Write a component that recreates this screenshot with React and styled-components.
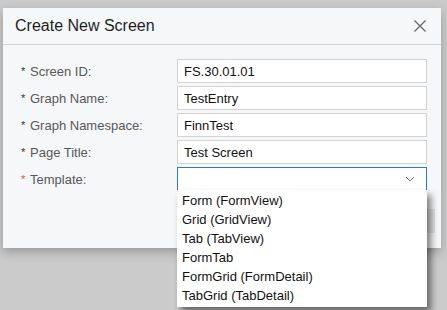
import { Fragment } from "react";
import styled, { createGlobalStyle } from "styled-components";

const GlobalStyle = createGlobalStyle`
  html, body {
    margin: 0;
    padding: 0;
    background: #cbcbcb;
    font-family: "Liberation Sans", Arial, sans-serif;
  }
  #root {
    height: 310px;
    overflow: hidden;
  }
`;

const fields = [
  { label: "Screen ID:", value: "FS.30.01.01" },
  { label: "Graph Name:", value: "TestEntry" },
  { label: "Graph Namespace:", value: "FinnTest" },
  { label: "Page Title:", value: "Test Screen" },
];

const options = [
  "Form (FormView)",
  "Grid (GridView)",
  "Tab (TabView)",
  "FormTab",
  "FormGrid (FormDetail)",
  "TabGrid (TabDetail)",
];

const Dialog = styled.div`
  margin: 8px 0 0 3px;
  width: 438px;
  background: #f5f7f9;
  box-shadow: 0 4px 10px rgba(0, 0, 0, 0.25);
  box-sizing: border-box;
`;

const Header = styled.header`
  height: 36px;
  display: flex;
  align-items: center;
  justify-content: space-between;
  padding: 0 14px 0 12px;
  border-bottom: 1px solid #d4d7da;
`;

const Title = styled.h2`
  margin: 0;
  font-size: 16px;
  font-weight: normal;
  color: #1f1f1f;
`;

const CloseButton = styled.button`
  border: 0;
  background: transparent;
  padding: 0;
  width: 14px;
  height: 14px;
  display: flex;
  color: #6b6b6b;
`;

const Body = styled.div`
  padding: 14px 14px 0 15px;
  display: grid;
  grid-template-columns: 159px 250px;
  row-gap: 3px;
`;

const Label = styled.label`
  display: flex;
  align-items: center;
  height: 24px;
  font-size: 13px;
  color: #585858;
`;

const Star = styled.span`
  width: 9px;
  padding-left: 3px;
  font-size: 11px;
  color: ${(p) => (p.$error ? "#d9534f" : "#333")};
`;

const Input = styled.div`
  height: 24px;
  box-sizing: border-box;
  border: 1px solid ${(p) => (p.$focused ? "#2a7ad4" : "#d3d3d3")};
  background: #fff;
  padding: 0 6px;
  display: flex;
  align-items: center;
  justify-content: space-between;
  font-size: 13px;
  color: #111;
  position: relative;
`;

const Chevron = styled.svg`
  width: 10px;
  height: 6px;
  margin-right: 5px;
`;

const Menu = styled.ul`
  position: absolute;
  top: 100%;
  left: -1px;
  width: 250px;
  margin: 0;
  padding: 1px 0 2px;
  list-style: none;
  background: #fff;
  box-shadow: 4px 5px 7px rgba(0, 0, 0, 0.5);
  z-index: 2;
`;

const Option = styled.li`
  height: 19px;
  line-height: 19px;
  padding-left: 5px;
  font-size: 13px;
  color: #111;
`;

const Footer = styled.footer`
  display: flex;
  justify-content: flex-end;
  gap: 6px;
  padding: 18px 6px 15px 0;
`;

const Button = styled.button`
  height: 24px;
  padding: 0 14px;
  border: 0;
  background: #e2e3e4;
  font-family: inherit;
  font-size: 13px;
  color: #222;
`;

export default function App() {
  return (
    <>
      <GlobalStyle />
      <Dialog>
        <Header>
          <Title>Create New Screen</Title>
          <CloseButton aria-label="Close">
            <svg width="14" height="14" viewBox="0 0 14 14">
              <path d="M1.5 1.5 L12.5 12.5 M12.5 1.5 L1.5 12.5" stroke="currentColor" strokeWidth="1.4" />
            </svg>
          </CloseButton>
        </Header>
        <Body>
          {fields.map((f) => (
            <Fragment key={f.label}>
              <Label>
                <Star>*</Star>
                {f.label}
              </Label>
              <Input>{f.value}</Input>
            </Fragment>
          ))}
          <Label>
            <Star $error>*</Star>
            Template:
          </Label>
          <Input $focused>
            <span />
            <Chevron viewBox="0 0 10 6">
              <path d="M1 1 L5 5 L9 1" fill="none" stroke="#777" strokeWidth="1" />
            </Chevron>
            <Menu>
              {options.map((o) => (
                <Option key={o}>{o}</Option>
              ))}
            </Menu>
          </Input>
        </Body>
        <Footer>
          <Button>OK</Button>
          <Button>Cancel</Button>
        </Footer>
      </Dialog>
    </>
  );
}
